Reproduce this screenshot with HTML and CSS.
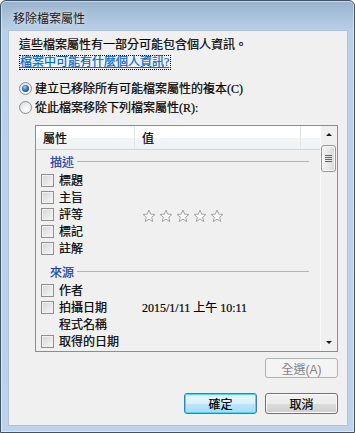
FILE: index.html
```html
<!DOCTYPE html>
<html lang="zh-Hant">
<head>
  <meta charset="UTF-8">
  <title>移除檔案屬性</title>
  <link rel="stylesheet" href="styles.css">
</head>
<body>
  <div class="window">
    <!-- Title bar -->
    <div class="titlebar">移除檔案屬性</div>

    <div class="client">
      <p class="intro">這些檔案屬性有一部分可能包含個人資訊。</p>
      <div class="link-row"><a class="link" href="#">檔案中可能有什麼個人資訊?</a></div>

      <!-- Options -->
      <div class="options">
        <div class="radio-row"><span class="radio checked"></span>建立已移除所有可能檔案屬性的複本(C)</div>
        <div class="radio-row"><span class="radio"></span>從此檔案移除下列檔案屬性(R):</div>
      </div>

      <!-- Property list -->
      <div class="listbox">
        <div class="list-main">
          <div class="list-header">
            <div class="col-name">屬性</div>
            <div class="col-value">值</div>
            <div class="col-rest"></div>
          </div>
          <div class="list-body">
            <div class="group"><span>描述</span><i></i></div>
            <div class="row"><span class="check"></span><span class="name">標題</span></div>
            <div class="row"><span class="check"></span><span class="name">主旨</span></div>
            <div class="row">
              <span class="check"></span><span class="name">評等</span>
              <span class="value stars">
                <svg viewBox="0 0 14 14"><path d="M7 1 L8.7 5.2 L13 5.4 L9.7 8.2 L10.8 12.6 L7 10.1 L3.2 12.6 L4.3 8.2 L1 5.4 L5.3 5.2 Z"/></svg>
                <svg viewBox="0 0 14 14"><path d="M7 1 L8.7 5.2 L13 5.4 L9.7 8.2 L10.8 12.6 L7 10.1 L3.2 12.6 L4.3 8.2 L1 5.4 L5.3 5.2 Z"/></svg>
                <svg viewBox="0 0 14 14"><path d="M7 1 L8.7 5.2 L13 5.4 L9.7 8.2 L10.8 12.6 L7 10.1 L3.2 12.6 L4.3 8.2 L1 5.4 L5.3 5.2 Z"/></svg>
                <svg viewBox="0 0 14 14"><path d="M7 1 L8.7 5.2 L13 5.4 L9.7 8.2 L10.8 12.6 L7 10.1 L3.2 12.6 L4.3 8.2 L1 5.4 L5.3 5.2 Z"/></svg>
                <svg viewBox="0 0 14 14"><path d="M7 1 L8.7 5.2 L13 5.4 L9.7 8.2 L10.8 12.6 L7 10.1 L3.2 12.6 L4.3 8.2 L1 5.4 L5.3 5.2 Z"/></svg>
              </span>
            </div>
            <div class="row"><span class="check"></span><span class="name">標記</span></div>
            <div class="row"><span class="check"></span><span class="name">註解</span></div>
            <div class="group second"><span>來源</span><i></i></div>
            <div class="row"><span class="check"></span><span class="name">作者</span></div>
            <div class="row"><span class="check"></span><span class="name">拍攝日期</span><span class="value">2015/1/11 上午 10:11</span></div>
            <div class="row"><span class="no-check"></span><span class="name">程式名稱</span></div>
            <div class="row"><span class="check"></span><span class="name">取得的日期</span></div>
          </div>
        </div>

        <!-- Scrollbar -->
        <div class="scrollbar">
          <div class="arrow up"></div>
          <div class="thumb"><b></b><b></b><b></b><b></b></div>
          <div class="track"></div>
          <div class="arrow down"></div>
        </div>
      </div>

      <div class="select-row">
        <button class="btn" disabled>全選(A)</button>
      </div>

      <div class="button-row">
        <button class="btn default">確定</button>
        <button class="btn">取消</button>
      </div>
    </div>
  </div>
</body>
</html>
```

FILE: styles.css
```css
/* Base */
* {
  margin: 0;
  padding: 0;
  box-sizing: border-box;
}

body {
  background: #ffffff;
  font-family: "Liberation Serif", "Noto Sans CJK TC", serif;
  font-size: 12px;
  color: #000;
  -webkit-text-stroke: 0.2px #000;
}

/* Window frame */
.window {
  width: 355px;
  height: 433px;
  border: 1px solid #3f5468;
  border-radius: 6px 6px 0 0;
  background: linear-gradient(#99b3cd 0, #b9d0e8 30px, #bcd3eb 100%);
  padding: 0 6px 6px 7px;
  display: flex;
  flex-direction: column;
  box-shadow: inset 0 0 0 1px rgba(255, 255, 255, 0.45);
}

.titlebar {
  height: 29px;
  padding: 9px 0 0 5px;
  font-family: "Noto Sans CJK TC", sans-serif;
  font-size: 12px;
  line-height: 16px;
  color: #1b1b1b;
  -webkit-text-stroke: 0;
  text-shadow: 0 0 6px rgba(255, 255, 255, 0.9);
}

/* Client area */
.client {
  flex: 1;
  background: #f0f0f0;
  border: 1px solid #aec4dc;
  padding: 6px 9px 0 10px;
  display: flex;
  flex-direction: column;
}

.intro {
  line-height: 16px;
}

.link-row {
  margin-top: 2px;
  height: 15px;
}

.link {
  display: inline-block;
  color: #0066cc;
  -webkit-text-stroke: 0.2px #0066cc;
  text-decoration: underline;
  border: 1px dotted #000;
  line-height: 13px;
  padding: 0 1px 0 0;
}

/* Radio buttons */
.options {
  margin-top: 9px;
}

.radio-row {
  display: flex;
  align-items: center;
  height: 19px;
  line-height: 16px;
  gap: 3px;
}

.radio {
  width: 13px;
  height: 13px;
  border-radius: 50%;
  border: 1px solid #8b9097;
  background: radial-gradient(circle at 60% 65%, #ffffff 0, #f1f1f1 40%, #d2d4d7 100%);
  position: relative;
}

.radio.checked::after {
  content: "";
  position: absolute;
  left: 2px;
  top: 2px;
  width: 7px;
  height: 7px;
  border-radius: 50%;
  background: radial-gradient(circle at 40% 35%, #9fd0ff 0, #2f73c4 45%, #123f7a 100%);
}

/* Property list */
.listbox {
  margin: 8px 0 0 16px;
  height: 227px;
  border: 1px solid #8a8d92;
  display: flex;
  background: #f0f0f0;
}

.list-main {
  flex: 1;
  display: flex;
  flex-direction: column;
}

.list-header {
  display: flex;
  height: 24px;
  border-bottom: 1px solid #d5d5d5;
  background: linear-gradient(#ffffff 0, #ffffff 50%, #f3f4f6 51%, #f1f2f4 100%);
  line-height: 16px;
}

.col-name {
  width: 99px;
  padding: 5px 0 0 7px;
  border-right: 1px solid #e3e5e8;
}

.col-value {
  width: 166px;
  padding: 5px 0 0 7px;
  border-right: 1px solid #e3e5e8;
}

.col-rest {
  flex: 1;
}

.list-body {
  padding-top: 1px;
}

.group {
  display: flex;
  align-items: center;
  height: 21px;
  padding: 0 11px 0 14px;
  color: #1e3ca0;
  -webkit-text-stroke: 0.2px #1e3ca0;
  gap: 3px;
}

.group.second {
  margin-top: 4px;
}

.group i {
  flex: 1;
  height: 1px;
  background: #a7b6cf;
}

.row {
  display: flex;
  align-items: center;
  height: 17px;
  line-height: 16px;
}

.check,
.no-check {
  width: 13px;
  height: 13px;
  margin-left: 5px;
  flex: none;
}

.check {
  border: 1px solid #8e8f8f;
  background: linear-gradient(135deg, #d4d5d7, #f7f7f7);
  box-shadow: inset 0 0 0 1px #f1f1f1;
}

.name {
  width: 76px;
  margin-left: 5px;
  white-space: nowrap;
}

.value {
  padding-left: 7px;
}

.stars {
  display: flex;
  gap: 3px;
  padding-left: 7px;
  margin-top: 2px;
}

.stars svg {
  width: 14px;
  height: 14px;
  fill: #fafafa;
  stroke: #a3a5a8;
  stroke-width: 1;
}

/* Scrollbar */
.scrollbar {
  width: 17px;
  display: flex;
  flex-direction: column;
  background: #f0f0f0;
  border-left: 1px solid #fbfbfb;
}

.arrow {
  height: 17px;
  position: relative;
}

.arrow::after {
  content: "";
  position: absolute;
  left: 5px;
  border-left: 3px solid transparent;
  border-right: 3px solid transparent;
}

.arrow.up::after {
  top: 7px;
  border-bottom: 3px solid #1c1c1c;
}

.arrow.down::after {
  top: 7px;
  border-top: 3px solid #1c1c1c;
}

.thumb {
  margin: 2px 1px 0 0;
  height: 27px;
  border: 1px solid #979797;
  border-radius: 3px;
  background: linear-gradient(90deg, #f3f3f3, #e8e8e8 50%, #d8d8d8);
  box-shadow: inset 0 0 0 1px #fdfdfd;
  display: flex;
  flex-direction: column;
  align-items: center;
  justify-content: center;
  gap: 1px;
}

.thumb b {
  display: block;
  width: 7px;
  height: 1px;
  background: #636363;
}

.track {
  flex: 1;
}

/* Buttons */
.select-row,
.button-row {
  display: flex;
  justify-content: flex-end;
  gap: 8px;
}

.select-row {
  margin-top: 6px;
}

.button-row {
  margin-top: 15px;
}

.btn {
  width: 73px;
  height: 21px;
  border: 1px solid #707070;
  border-radius: 3px;
  background: linear-gradient(#f2f2f2 0, #ebebeb 50%, #dddddd 51%, #cfcfcf 100%);
  box-shadow: inset 0 0 0 1px #fcfcfc;
  font-family: "Liberation Sans", "Noto Sans CJK TC", sans-serif;
  font-size: 12px;
  color: #000;
}

.btn:disabled {
  height: 20px;
  border-color: #adb2b5;
  background: #f4f4f4;
  color: #838383;
  -webkit-text-stroke: 0;
  box-shadow: none;
}

.btn.default {
  border-color: #3c7fb1;
  background: linear-gradient(#eaf6fd 0, #d9f0fc 50%, #bee6fd 51%, #a7d9f5 100%);
  box-shadow: inset 0 0 0 1px #48d6fb;
}
```
